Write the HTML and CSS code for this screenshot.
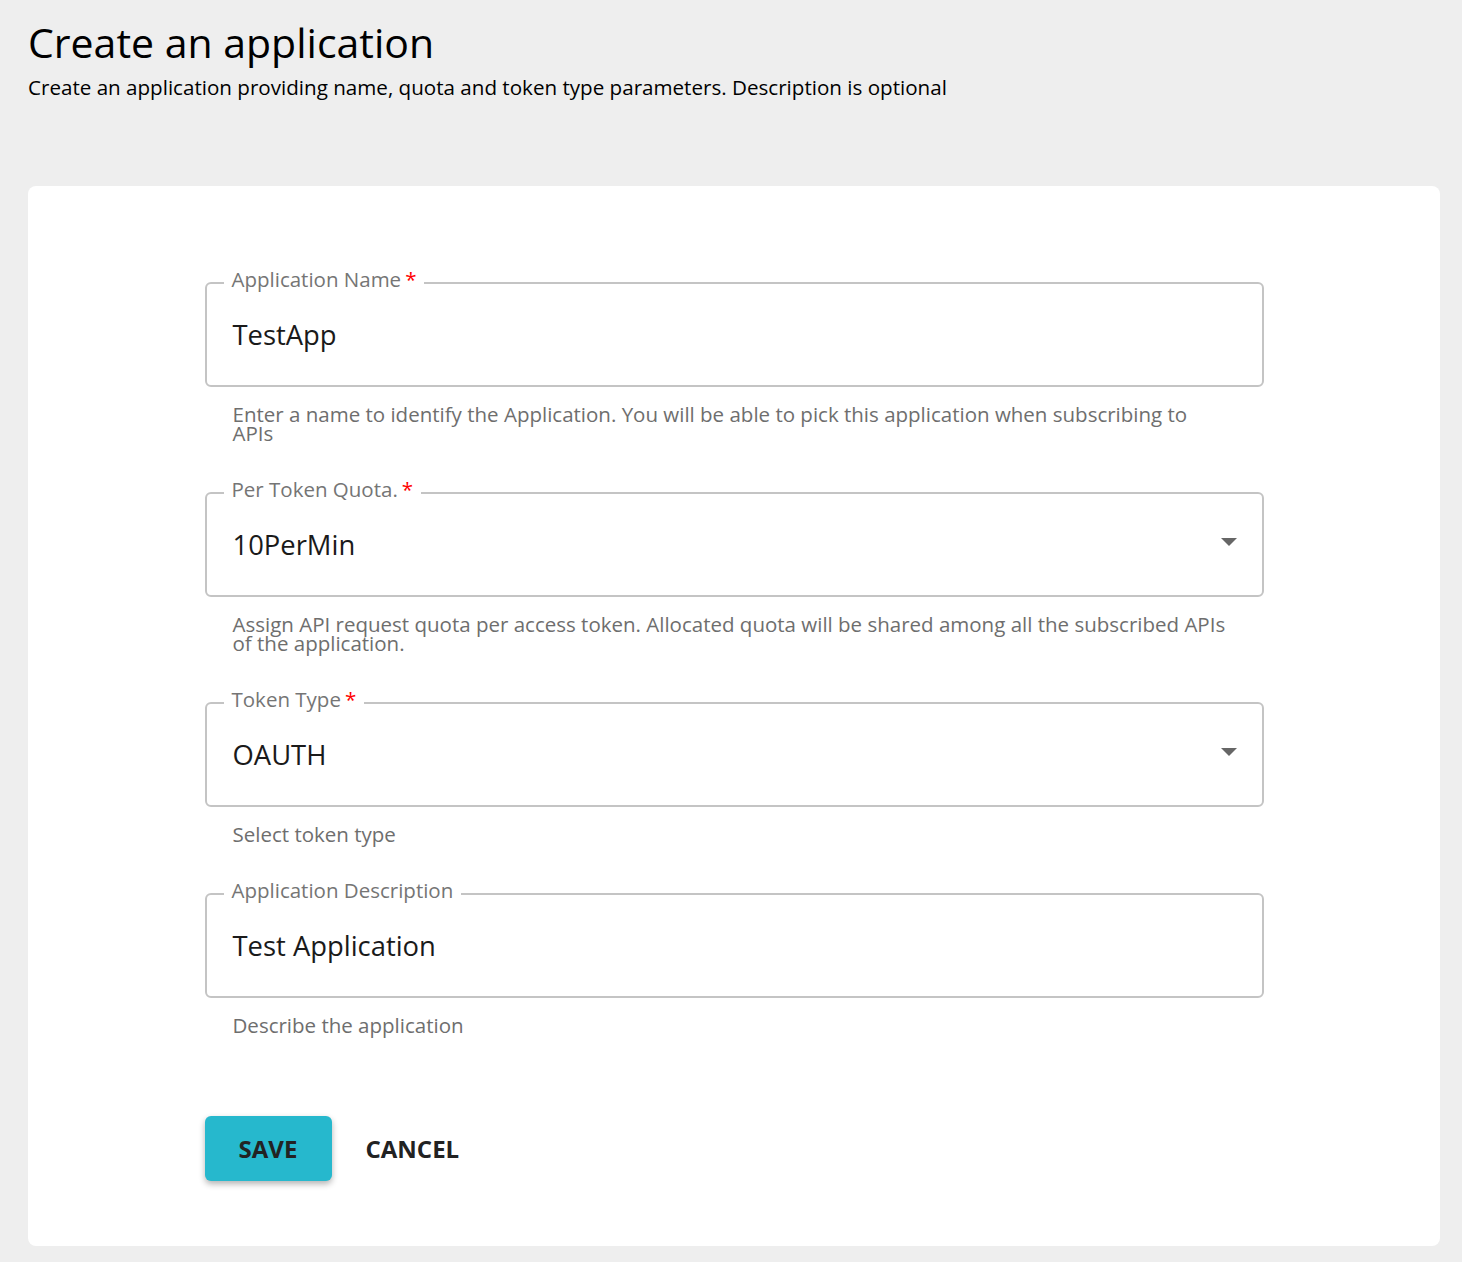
FILE: index.html
```html
<!DOCTYPE html>
<html lang="en">
<head>
  <meta charset="UTF-8">
  <title>Create an application</title>
  <link rel="stylesheet" href="styles.css">
</head>
<body>

  <div class="page">
    <h1 class="title">Create an application</h1>
    <p class="subtitle">Create an application providing name, quota and token type parameters. Description is optional</p>

    <div class="card">
      <form class="app-form">

        <div class="form-group">
          <div class="field">
            <span class="field-label">Application Name<span class="req">*</span></span>
            <span class="field-value">TestApp</span>
          </div>
          <p class="helper">Enter a name to identify the Application. You will be able to pick this application when subscribing to APIs</p>
        </div>

        <div class="form-group">
          <div class="field select">
            <span class="field-label">Per Token Quota.<span class="req">*</span></span>
            <span class="field-value">10PerMin</span>
            <svg class="arrow" width="16" height="8" viewBox="0 0 16 8"><polygon points="0,0 16,0 8,8" fill="#666"/></svg>
          </div>
          <p class="helper">Assign API request quota per access token. Allocated quota will be shared among all the subscribed APIs of the application.</p>
        </div>

        <div class="form-group">
          <div class="field select">
            <span class="field-label">Token Type<span class="req">*</span></span>
            <span class="field-value">OAUTH</span>
            <svg class="arrow" width="16" height="8" viewBox="0 0 16 8"><polygon points="0,0 16,0 8,8" fill="#666"/></svg>
          </div>
          <p class="helper">Select token type</p>
        </div>

        <div class="form-group">
          <div class="field">
            <span class="field-label">Application Description</span>
            <span class="field-value">Test Application</span>
          </div>
          <p class="helper">Describe the application</p>
        </div>

        <div class="actions">
          <button type="button" class="btn btn-save">Save</button>
          <button type="button" class="btn btn-cancel">Cancel</button>
        </div>

      </form>
    </div>
  </div>

</body>
</html>
```

FILE: styles.css
```css
body {
  font-family: 'Open Sans', sans-serif;
  background-color: #eeeeee;
  margin: 0;
  padding: 0;
  color: #000;
}

.page {
  padding: 12px 22px 16px 28px;
}

.title {
  font-size: 41px;
  font-weight: 400;
  line-height: 60px;
  margin: 0;
}

.subtitle {
  font-size: 20.6px;
  line-height: 30px;
  margin: 0;
}

.card {
  margin-top: 84px;
  background-color: #fff;
  border-radius: 8px;
  padding: 96px 0 65px;
}

.app-form {
  width: 75%;
  margin: 0 auto;
}

.form-group {
  margin-bottom: 49px;
}

.field {
  position: relative;
  box-sizing: border-box;
  height: 105px;
  border: 2px solid #c4c4c4;
  border-radius: 6px;
  display: flex;
  align-items: center;
  padding: 0 25px 0 26px;
}

.field-label {
  position: absolute;
  top: -18px;
  left: 17px;
  padding: 0 8px;
  background-color: #fff;
  font-size: 20.5px;
  line-height: 26px;
  color: #757575;
}

.req {
  color: #f00;
  margin-left: 4px;
}

.field-value {
  font-size: 27.4px;
  color: #1a1a1a;
  flex: 1;
}

.arrow {
  margin-bottom: 6px;
}

.helper {
  margin: 18px 0 0;
  padding: 0 32px 0 28px;
  font-size: 20.5px;
  line-height: 19px;
  color: #6e6e6e;
}

.actions {
  display: flex;
  align-items: center;
  margin-top: 81px;
}

.btn {
  font-family: 'Open Sans', sans-serif;
  font-weight: 700;
  font-size: 24px;
  text-transform: uppercase;
  border: none;
  border-radius: 6px;
  cursor: pointer;
  color: #222;
  background: none;
}

.btn-save {
  background-color: #26b8cd;
  width: 127px;
  height: 65px;
  box-shadow: 0 3px 6px rgba(0, 0, 0, 0.3);
}

.btn-cancel {
  margin-left: 20px;
  padding: 0 14px;
  height: 65px;
}
```
